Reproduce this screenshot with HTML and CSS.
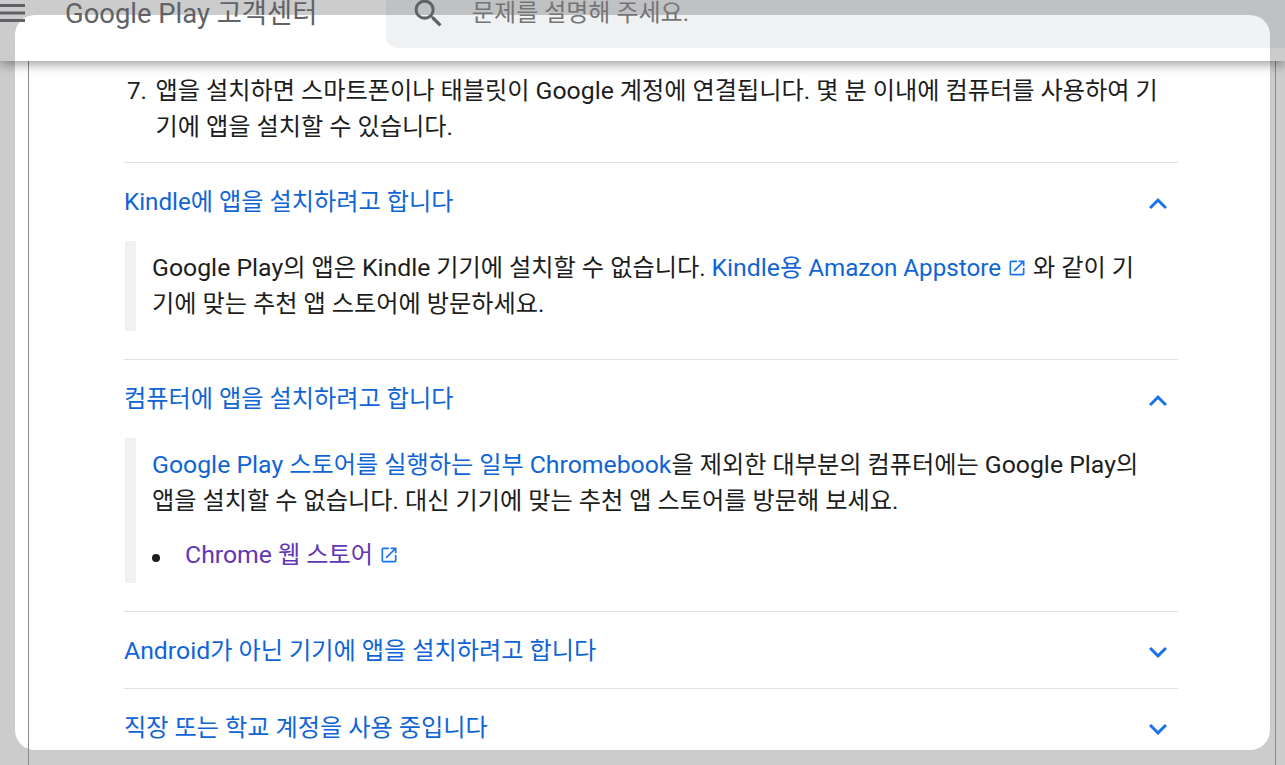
FILE: index.html
```html
<!DOCTYPE html>
<html lang="ko">
<head>
<meta charset="utf-8">
<title>Google Play 고객센터</title>
<link rel="stylesheet" href="styles.css">
</head>
<body>
<div class="page">
  <main class="modal">
    <div class="content">
      <div class="step"><span class="num">7.</span><span>앱을 설치하면 스마트폰이나 태블릿이 <span class="lat">Google</span> 계정에 연결됩니다. 몇 분 이내에 컴퓨터를 사용하여 기기에 앱을 설치할 수 있습니다.</span></div>
      <section class="acc">
        <div class="acc-head"><span class="acc-title">Kindle에 앱을 설치하려고 합니다</span>
          <svg class="chev" viewBox="0 0 24 24"><path d="M7.41 15.41 12 10.83l4.59 4.58L18 14l-6-6-6 6z"/></svg></div>
        <div class="acc-body">
          <p><span class="lat">Google Play</span>의 앱은 <span class="lat">Kindle</span> 기기에 설치할 수 없습니다. <a href="#"><span class="lat">Kindle</span>용 Amazon Appstore</a><svg class="ext" viewBox="0 0 24 24"><path d="M19 19H5V5h7V3H5a2 2 0 0 0-2 2v14a2 2 0 0 0 2 2h14a2 2 0 0 0 2-2v-7h-2v7zM14 3v2h3.590l-9.830 9.830 1.410 1.410L19 6.410V10h2V3h-7z"/></svg> 와 같이 기기에 맞는 추천 앱 스토어에 방문하세요.</p>
        </div>
      </section>
      <section class="acc">
        <div class="acc-head"><span class="acc-title">컴퓨터에 앱을 설치하려고 합니다</span>
          <svg class="chev" viewBox="0 0 24 24"><path d="M7.41 15.41 12 10.83l4.59 4.58L18 14l-6-6-6 6z"/></svg></div>
        <div class="acc-body">
          <p><a href="#"><span class="lat">Google Play</span> 스토어를 실행하는 일부 <span class="lat">Chromebook</span></a>을 제외한 대부분의 컴퓨터에는 <span class="lat">Google Play</span>의 앱을 설치할 수 없습니다. 대신 기기에 맞는 추천 앱 스토어를 방문해 보세요.</p>
          <ul>
            <li><a href="#" class="visited"><span class="lat">Chrome</span> 웹 스토어</a><svg class="ext" viewBox="0 0 24 24"><path d="M19 19H5V5h7V3H5a2 2 0 0 0-2 2v14a2 2 0 0 0 2 2h14a2 2 0 0 0 2-2v-7h-2v7zM14 3v2h3.590l-9.830 9.830 1.410 1.410L19 6.410V10h2V3h-7z"/></svg></li>
          </ul>
        </div>
      </section>
      <section class="acc closed">
        <div class="acc-head"><span class="acc-title"><span class="lat">Android</span>가 아닌 기기에 앱을 설치하려고 합니다</span>
          <svg class="chev" viewBox="0 0 24 24"><path d="M16.59 8.59 12 13.17 7.41 8.59 6 10l6 6 6-6z"/></svg></div>
      </section>
      <section class="acc closed">
        <div class="acc-head"><span class="acc-title">직장 또는 학교 계정을 사용 중입니다</span>
          <svg class="chev" viewBox="0 0 24 24"><path d="M16.59 8.59 12 13.17 7.41 8.59 6 10l6 6 6-6z"/></svg></div>
      </section>
    </div>
  </main>
  <div class="frame"></div>
  <header class="topbar">
    <svg class="menu" viewBox="0 0 25 18"><path d="M0 0h25v3H0zM0 7.500h25v3H0zM0 15h25v3H0z"/></svg>
    <div class="brand">Google Play 고객센터</div>
    <div class="search">
      <svg class="mag" viewBox="0 0 24 24"><path d="M15.500 14h-.79l-.28-.27A6.470 6.470 0 0 0 16 9.500 6.500 6.500 0 1 0 9.500 16c1.610 0 3.090-.59 4.230-1.570l.27.28v.79l5 4.990L20.490 19l-4.990-5zm-6 0C7.010 14 5 11.990 5 9.500S7.010 5 9.500 5 14 7.010 14 9.500 11.990 14 9.500 14z"/></svg>
      <span class="hint">문제를 설명해 주세요.</span>
    </div>
  </header>
</div>
</body>
</html>
```
FILE: styles.css
```css
* { box-sizing: border-box; }
html, body { margin: 0; height: 100%; }
body {
  font-family: Roboto, "Noto Sans CJK KR", sans-serif;
  color: #1c1d20;
  overflow: hidden;
}
.page {
  position: relative;
  width: 1285px;
  height: 765px;
  background: #cccccc;
  padding: 15px;
  overflow: hidden;
}
.modal {
  height: 735px;
  background: #fff;
  border-radius: 20px;
  overflow: hidden;
}
.content {
  padding: 58px 92px 0 109px;
  font-size: 24.2px;
  line-height: 36px;
}
.lat { font-size: 24.800px; line-height: 1; }
.step { display: flex; padding-bottom: 17px; }
.num { flex: none; width: 31.500px; padding-left: 3px; }
.acc { border-top: 1px solid #e0e0e0; }
.acc-head {
  display: flex;
  justify-content: space-between;
  align-items: center;
  height: 76px;
  color: #1065d6;
  padding-right: 2px;
}
.acc-title { margin-top: 2px; }
.chev { width: 36px; height: 36px; fill: #1a73e8; margin-top: 6px; }
.closed .chev { margin-top: 4px; }
.acc-body {
  border-left: 11px solid #f1f1f1;
  margin: 2px 0 28px 1px;
  padding: 9px 28px 9px 16px;
}
.acc-body p { margin: 0; }
.acc-body ul { margin: 18px 0 1px; padding: 0; list-style: none; }
.acc-body li::before {
  content: "";
  display: inline-block;
  width: 8px;
  height: 8px;
  border-radius: 50%;
  background: #1c1d20;
  margin-right: 25px;
  vertical-align: 1px;
}
a { color: #1065d6; text-decoration: none; }
a.visited { color: #6236b5; }
.ext { width: 20px; height: 20px; fill: #1a73e8; margin-left: 6px; vertical-align: -2px; }
.frame {
  position: absolute;
  left: 28px;
  top: 61px;
  width: 1248px;
  height: 704px;
  border-left: 1px solid #888;
  border-right: 1px solid #888;
  pointer-events: none;
}
.topbar {
  position: absolute;
  left: 0;
  top: 0;
  width: 1285px;
  height: 61px;
  box-shadow: 0 4px 10px rgba(0,0,0,.35);
  display: flex;
  align-items: flex-start;
}
.menu { width: 25px; height: 18px; fill: #5f6368; margin-top: 4px; flex: none; }
.brand { margin: -3px 0 0 40px; width: 321px; font-size: 27.400px; line-height: 34px; color: #5f6368; flex: none; }
.search {
  flex: 1;
  height: 48px;
  background: rgba(30,45,80,.065);
  border-radius: 0 0 0 12px;
  display: flex;
  align-items: flex-start;
  padding-left: 24px;
  color: #757575;
}
.mag { width: 37px; height: 37px; fill: #5f6368; margin-top: -5px; flex: none; }
.hint { margin: -4px 0 0 25px; font-size: 24px; line-height: 35px; }
```
